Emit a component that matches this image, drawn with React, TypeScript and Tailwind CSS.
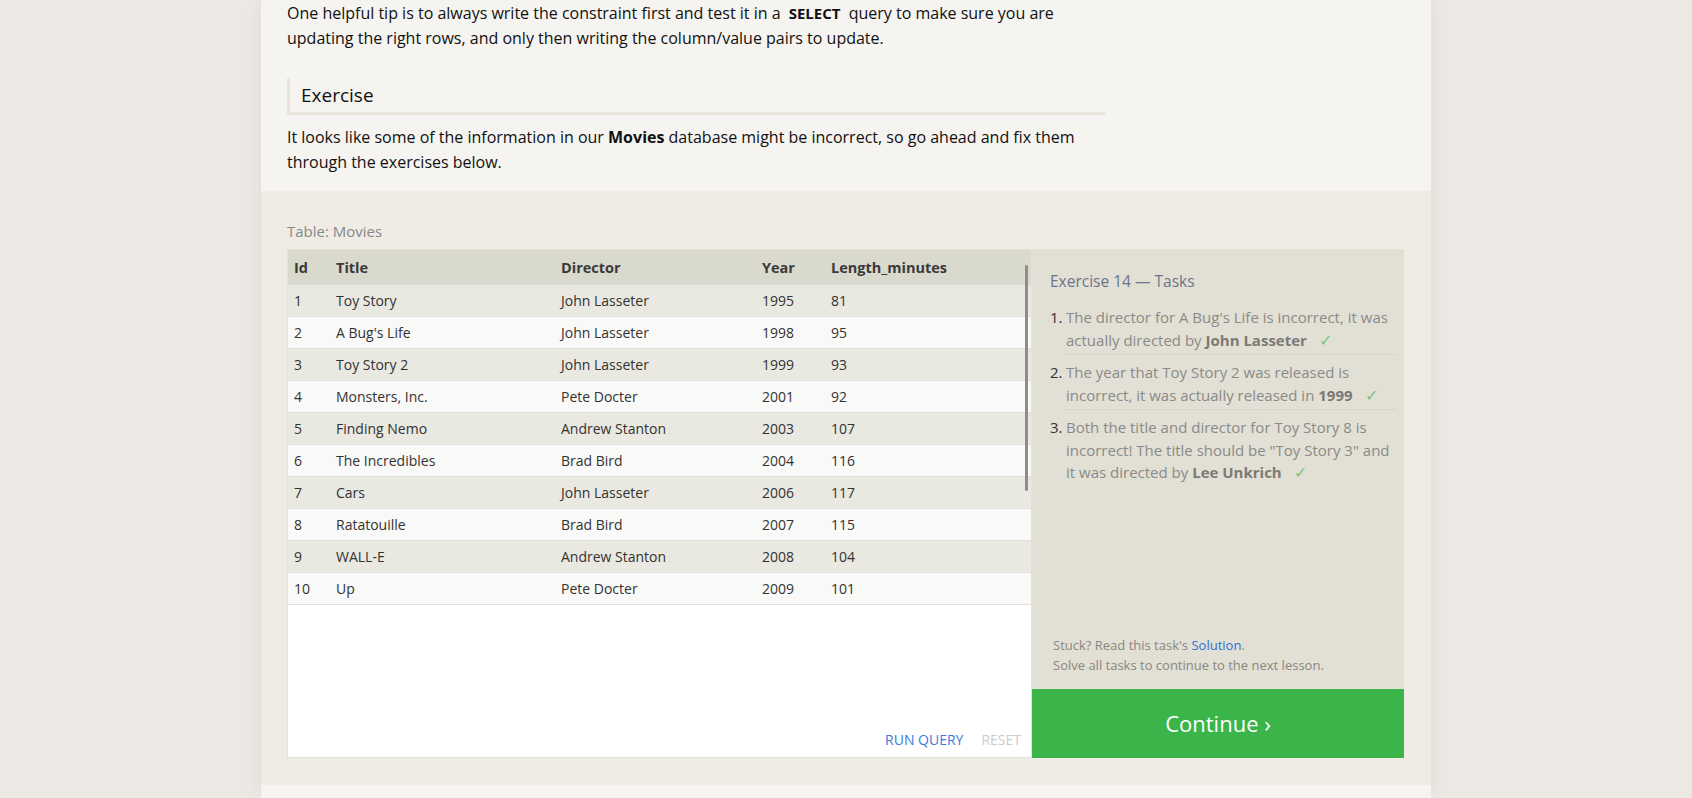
import { Fragment } from 'react';

interface Movie {
  id: number;
  title: string;
  director: string;
  year: number;
  length: number;
}

const movies: Movie[] = [
  { id: 1, title: 'Toy Story', director: 'John Lasseter', year: 1995, length: 81 },
  { id: 2, title: "A Bug's Life", director: 'John Lasseter', year: 1998, length: 95 },
  { id: 3, title: 'Toy Story 2', director: 'John Lasseter', year: 1999, length: 93 },
  { id: 4, title: 'Monsters, Inc.', director: 'Pete Docter', year: 2001, length: 92 },
  { id: 5, title: 'Finding Nemo', director: 'Andrew Stanton', year: 2003, length: 107 },
  { id: 6, title: 'The Incredibles', director: 'Brad Bird', year: 2004, length: 116 },
  { id: 7, title: 'Cars', director: 'John Lasseter', year: 2006, length: 117 },
  { id: 8, title: 'Ratatouille', director: 'Brad Bird', year: 2007, length: 115 },
  { id: 9, title: 'WALL-E', director: 'Andrew Stanton', year: 2008, length: 104 },
  { id: 10, title: 'Up', director: 'Pete Docter', year: 2009, length: 101 },
];

const columns = ['Id', 'Title', 'Director', 'Year', 'Length_minutes'];

const tasks = [
  (
    <>
      The director for A Bug's Life is incorrect, it was actually directed by{' '}
      <b className="text-[#7b7a76]">John Lasseter</b>
    </>
  ),
  (
    <>
      The year that Toy Story 2 was released is incorrect, it was actually released in{' '}
      <b className="text-[#7b7a76]">1999</b>
    </>
  ),
  (
    <>
      Both the title and director for Toy Story 8 is incorrect! The title should be "Toy Story 3" and it
      was directed by <b className="text-[#7b7a76]">Lee Unkrich</b>
    </>
  ),
];

export default function App() {
  return (
    <div className="min-h-screen bg-[#ece8e4] flex justify-center font-['Open_Sans','Noto_Sans',sans-serif] overflow-hidden">
      <div className="w-[1170px] bg-[#f5f4f0] shadow-[0_0_18px_rgba(0,0,0,0.06)]">
        <div className="px-[26px] pt-px">
          <div className="w-[818px] text-[16px] leading-[25px] text-[#111]">
            <p>
              One helpful tip is to always write the constraint first and test it in a{' '}
              <span className="font-bold text-[15px] px-1">SELECT</span> query to make sure you are
              updating the right rows, and only then writing the column/value pairs to update.
            </p>

            <h3 className="mt-[27px] h-[37px] border-l-[3px] border-b-[3px] border-[#e8e6dc] pl-[11px] text-[19px] leading-[34px] text-[#111]">
              Exercise
            </h3>

            <p className="mt-[10px]">
              It looks like some of the information in our <b>Movies</b> database might be incorrect, so go
              ahead and fix them through the exercises below.
            </p>
          </div>
        </div>

        <div className="mt-[16px] bg-[#efece5] px-[26px] pt-[30px] pb-[27px]">
          <div className="text-[15px] leading-[20px] text-[#888]">Table: Movies</div>

          <div className="mt-[8px] flex h-[509px]">
            <div className="relative w-[745px] bg-white border border-[#e3e1d9] flex flex-col">
              <div className="grid grid-cols-[42px_225px_201px_69px_1fr] text-[14px] text-[#333]">
                {columns.map((c) => (
                  <div key={c} className="bg-[#dad9cd] h-[35px] px-[6px] flex items-center font-bold text-[14.5px] text-[#3a3a3a]">
                    {c}
                  </div>
                ))}
                {movies.map((m, i) => {
                  const bg = i % 2 === 0 ? 'bg-[#e9e8e1]' : 'bg-[#f9f9f8]';
                  return (
                    <Fragment key={m.id}>
                      {[m.id, m.title, m.director, m.year, m.length].map((v, j) => (
                        <div key={j} className={`${bg} h-[32px] px-[6px] flex items-center border-b border-[#e0dfd8]`}>
                          {v}
                        </div>
                      ))}
                    </Fragment>
                  );
                })}
              </div>

              <div className="mt-auto flex justify-end gap-[18px] pr-[10px] pb-[7px] text-[14px] leading-[20px]">
                <button className="text-[#3a7bdc]">RUN QUERY</button>
                <button className="text-[#cccccc]">RESET</button>
              </div>

              {/* overlay scrollbar */}
              <div className="absolute left-[737px] top-[15px] w-[3px] h-[226px] rounded-full bg-[#8d8d8d]" />
            </div>

            <div className="w-[372px] bg-[#e2e0d5] flex flex-col">
              <div className="pl-[18px] pr-[8px] pt-[21px]">
                <h4 className="text-[15.5px] leading-[22px] text-[#6e7488]">Exercise 14 — Tasks</h4>
                <ol className="mt-[8px]">
                  {tasks.map((t, i) => (
                    <li key={i} className="flex">
                      <span className="w-[16px] shrink-0 pt-[6px] text-[15px] leading-[22.5px] text-[#333]">
                        {i + 1}.
                      </span>
                      <div
                        className={`flex-1 pt-[6px] pb-[3px] text-[15px] leading-[22.5px] text-[#8a8a88] ${
                          i < tasks.length - 1 ? 'border-b border-[#d6d4c9]' : ''
                        }`}
                      >
                        {t}
                        <span className="ml-[12px] text-[16px] text-[#7cc47f]">✓</span>
                      </div>
                    </li>
                  ))}
                </ol>
              </div>

              <div className="mt-auto px-[21px] pb-[14px] text-[13px] leading-[20px] text-[#8b8680]">
                <div>
                  Stuck? Read this task's <a className="text-[#2f6fd6]">Solution</a>.
                </div>
                <div>Solve all tasks to continue to the next lesson.</div>
              </div>
              <button className="h-[69px] bg-[#3bb54a] text-white text-[22px]">Continue ›</button>
            </div>
          </div>
        </div>
      </div>
    </div>
  );
}
